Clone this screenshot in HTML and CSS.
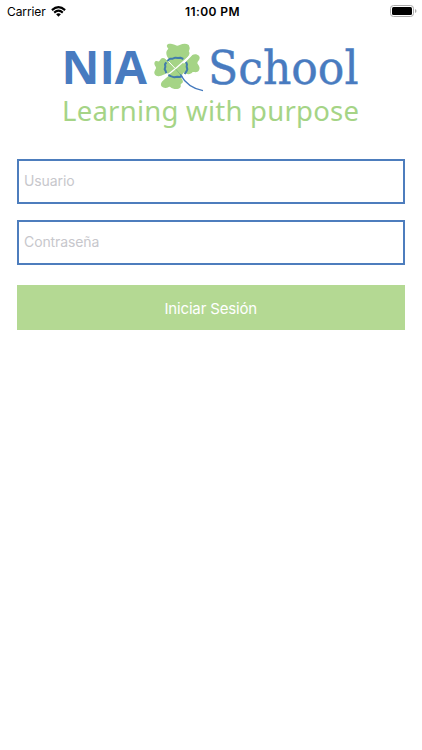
FILE: index.html
```html
<!DOCTYPE html>
<html lang="es">
<head>
<meta charset="utf-8">
<title>NIA School</title>
<link rel="stylesheet" href="styles.css">
</head>
<body>
<header class="status">
  <div class="carrier"><span>Carrier</span>
    <svg class="wifi" width="15" height="11" viewBox="0 0 15 11" fill="none" stroke="#000" stroke-width="2.1"><path d="M.9 4.1Q7.5-1.8 14.1 4.1M3.2 6.6Q7.5 2.8 11.8 6.6"/><path d="M5.1 8.3Q7.5 6.3 9.9 8.3L7.5 10.8Z" fill="#000" stroke="none"/></svg>
  </div>
  <time class="clock">11:00 PM</time>
  <svg class="battery" width="27" height="12" viewBox="0 0 27 12"><rect x=".5" y=".5" width="23" height="11" rx="3" fill="#fff" stroke="#aaa"/><rect x="2" y="2" width="20" height="8" rx="1.5"/><path d="M25 4Q26.5 4.6 26.5 6T25 8Z" fill="#aaa"/></svg>
</header>
<main class="login">
  <svg class="logo" width="302" height="96" viewBox="60 36 302 96">
    <text class="nia" x="61.5" y="84" textLength="85.5" lengthAdjust="spacingAndGlyphs">NIA</text>
    <text class="school" x="208" y="84" textLength="150.5" lengthAdjust="spacingAndGlyphs">School</text>
    <text class="tagline" x="62" y="121" textLength="297" lengthAdjust="spacing">Learning with purpose</text>
    <g transform="translate(145 38) scale(.3333)">
      <g fill="#a5d486">
        <circle cx="91" cy="90" r="29"/>
        <path d="M93 88C81 72 64 61 64 46C63 39 67 36 70 32C59 19 71 15 81 18C94 21 94 26 104 21C118 15 132 17 133 26C137 34 129 38 133 43C138 54 111 75 93 88Z"/>
        <path d="M98 94C112 83 130 64 142 51C151 45 165 51 164 60C164 67 157 69 157 76C160 81 167 89 162 97C157 106 147 101 143 102C138 108 131 111 122 106C112 101 106 98 98 94Z"/>
        <path d="M87 93C75 99 55 113 44 114C33 117 25 107 29 99C31 93 35 91 32 86C25 76 29 68 35 69C44 72 42 69 48 62C60 52 77 80 87 93Z"/>
        <path d="M92 97C78 109 64 119 52 130C43 140 50 149 58 149C68 153 70 143 76 147C84 155 101 155 105 149C110 145 105 141 108 138C117 133 114 128 109 120Z"/>
      </g>
      <path d="M91 92L141 48M91 92L46 128" stroke="#fff" stroke-width="4"/>
      <path d="M91 92L58 57" stroke="#fff" stroke-width="3"/>
      <g fill="none" stroke="#427cac" stroke-width="6" stroke-linejoin="round">
        <path d="M67 69L75 62L83 62L91 59L99 60L106 59L115 63"/>
        <path d="M123 72L126 79L125 86L127 94L124 101L119 108"/>
        <path d="M112 115L104 117L97 116L88 118L79 115L70 111"/>
        <path d="M64 106L62 99L59 94L61 86L60 79L64 73"/>
      </g>
      <path d="M92 93L108 112" fill="none" stroke="#6fac7a" stroke-width="2"/>
      <path d="M106 109C119 133 143 152 174 158" fill="none" stroke="#4379bd" stroke-width="4"/>
    </g>
  </svg>
  <form class="fields">
    <input class="field" type="text" placeholder="Usuario" aria-label="Usuario">
    <input class="field" type="password" placeholder="Contraseña" aria-label="Contraseña">
    <button class="submit" type="button">Iniciar Sesión</button>
  </form>
</main>
</body>
</html>
```
FILE: styles.css
```css
* { box-sizing: border-box; }
body {
  margin: 0;
  min-height: 750px;
  background: #fff;
  font-family: Inter, "Liberation Sans", sans-serif;
}
.status {
  display: grid;
  grid-template-columns: 1fr auto 1fr;
  align-items: center;
  height: 22px;
  padding: 0 5px 0 7px;
  font-size: 12px;
}
.carrier { display: flex; align-items: center; gap: 5px; letter-spacing: -.1px; }
.clock { font-weight: 600; letter-spacing: .4px; padding-left: 1px; }
.battery { justify-self: end; }
.login { display: flex; flex-direction: column; align-items: stretch; padding: 14px 16px 0; }
.logo { display: block; align-self: center; }
.nia { font: 700 46px "Open Sans", sans-serif; fill: #487bc0; }
.school { font: 47px "DejaVu Serif Condensed", "DejaVu Serif", serif; fill: #487bc0; stroke: #487bc0; stroke-width: .4px; }
.tagline { font: 27.5px "Noto Sans", sans-serif; fill: #a5d486; }
.fields { display: flex; flex-direction: column; margin: 27px 1px 0 .5px; }
.field {
  height: 45px;
  margin: 0 0 16px;
  padding: 0 5.5px 2px;
  border: 2px solid #4d7dbd;
  border-radius: 0;
  background: #fff;
  color: #000;
  font: 14px Inter, "Liberation Sans", sans-serif;
  letter-spacing: -.1px;
  outline: 0;
}
.field::placeholder { color: #c7c7cc; opacity: 1; }
.submit {
  height: 45px;
  margin-top: 4px;
  padding: 1px 0 0;
  border: 0;
  background: #b4d993;
  color: #fff;
  font: 15px Inter, "Liberation Sans", sans-serif;
  letter-spacing: -.15px;
}
```
